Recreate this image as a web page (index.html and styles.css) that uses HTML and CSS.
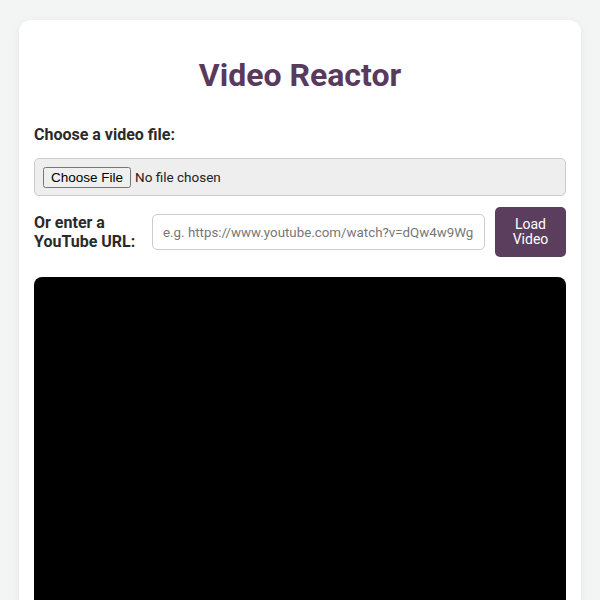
FILE: index.html
```html
<!DOCTYPE html>
<html>
<head>
<meta charset="utf-8">
<link rel="stylesheet" href="styles.css">
</head>
<body>
<div class="card">
  <h1 class="title">Video Reactor</h1>
  <label class="label">Choose a video file:</label>
  <div class="file-box"><input type="file" class="file-input"></div>
  <div class="url-row">
    <label class="label url-label">Or enter a<br>YouTube URL:</label>
    <input type="text" class="url-input" placeholder="e.g. https://www.youtube.com/watch?v=dQw4w9WgXcQ">
    <button class="load-btn">Load<br>Video</button>
  </div>
  <div class="video"></div>
</div>
</body>
</html>
```
FILE: styles.css
```css
html, body { margin: 0; padding: 0; }
body {
  background: #f3f4f4;
  font-family: Roboto, "Liberation Sans", sans-serif;
  color: #222;
  padding: 20px 19px 0 19px;
  overflow: hidden;
  height: 600px;
  box-sizing: border-box;
}
.card {
  background: #fff;
  border-radius: 12px;
  box-shadow: 0 2px 8px rgba(0,0,0,0.06);
  padding: 20px 15px 0 15px;
  height: 700px;
}
.title {
  margin: 16px 0 31px 0;
  text-align: center;
  font-size: 32px;
  font-weight: 700;
  color: #5a3a5c;
  line-height: 38px;
}
.label {
  display: block;
  font-size: 16px;
  font-weight: 700;
  color: #2a2a2a;
  line-height: 19px;
}
.file-box {
  margin-top: 14px;
  background: #eeeeee;
  border: 1px solid #cccccc;
  border-radius: 5px;
  height: 36px;
  display: flex;
  align-items: center;
  padding: 0 8px;
}
.file-input {
  font-family: Roboto, "Liberation Sans", sans-serif;
  font-size: 13.5px;
  color: #222;
}
.url-row {
  margin-top: 11px;
  display: flex;
  align-items: center;
  gap: 10px;
}
.url-label { width: 108px; flex: none; }
.url-input {
  flex: 1;
  min-width: 0;
  height: 36px;
  box-sizing: border-box;
  border: 1px solid #cccccc;
  border-radius: 5px;
  padding: 0 10px;
  font-family: Roboto, "Liberation Sans", sans-serif;
  font-size: 13.33px;
  color: #222;
}
.url-input::placeholder { color: #777; }
.load-btn {
  flex: none;
  width: 71px;
  height: 50px;
  background: #5b3d5e;
  color: #fff;
  border: none;
  border-radius: 5px;
  font-family: Roboto, "Liberation Sans", sans-serif;
  font-size: 14px;
  line-height: 15px;
  padding: 0;
}
.video {
  margin-top: 20px;
  background: #000;
  border-radius: 8px;
  height: 400px;
}
```
